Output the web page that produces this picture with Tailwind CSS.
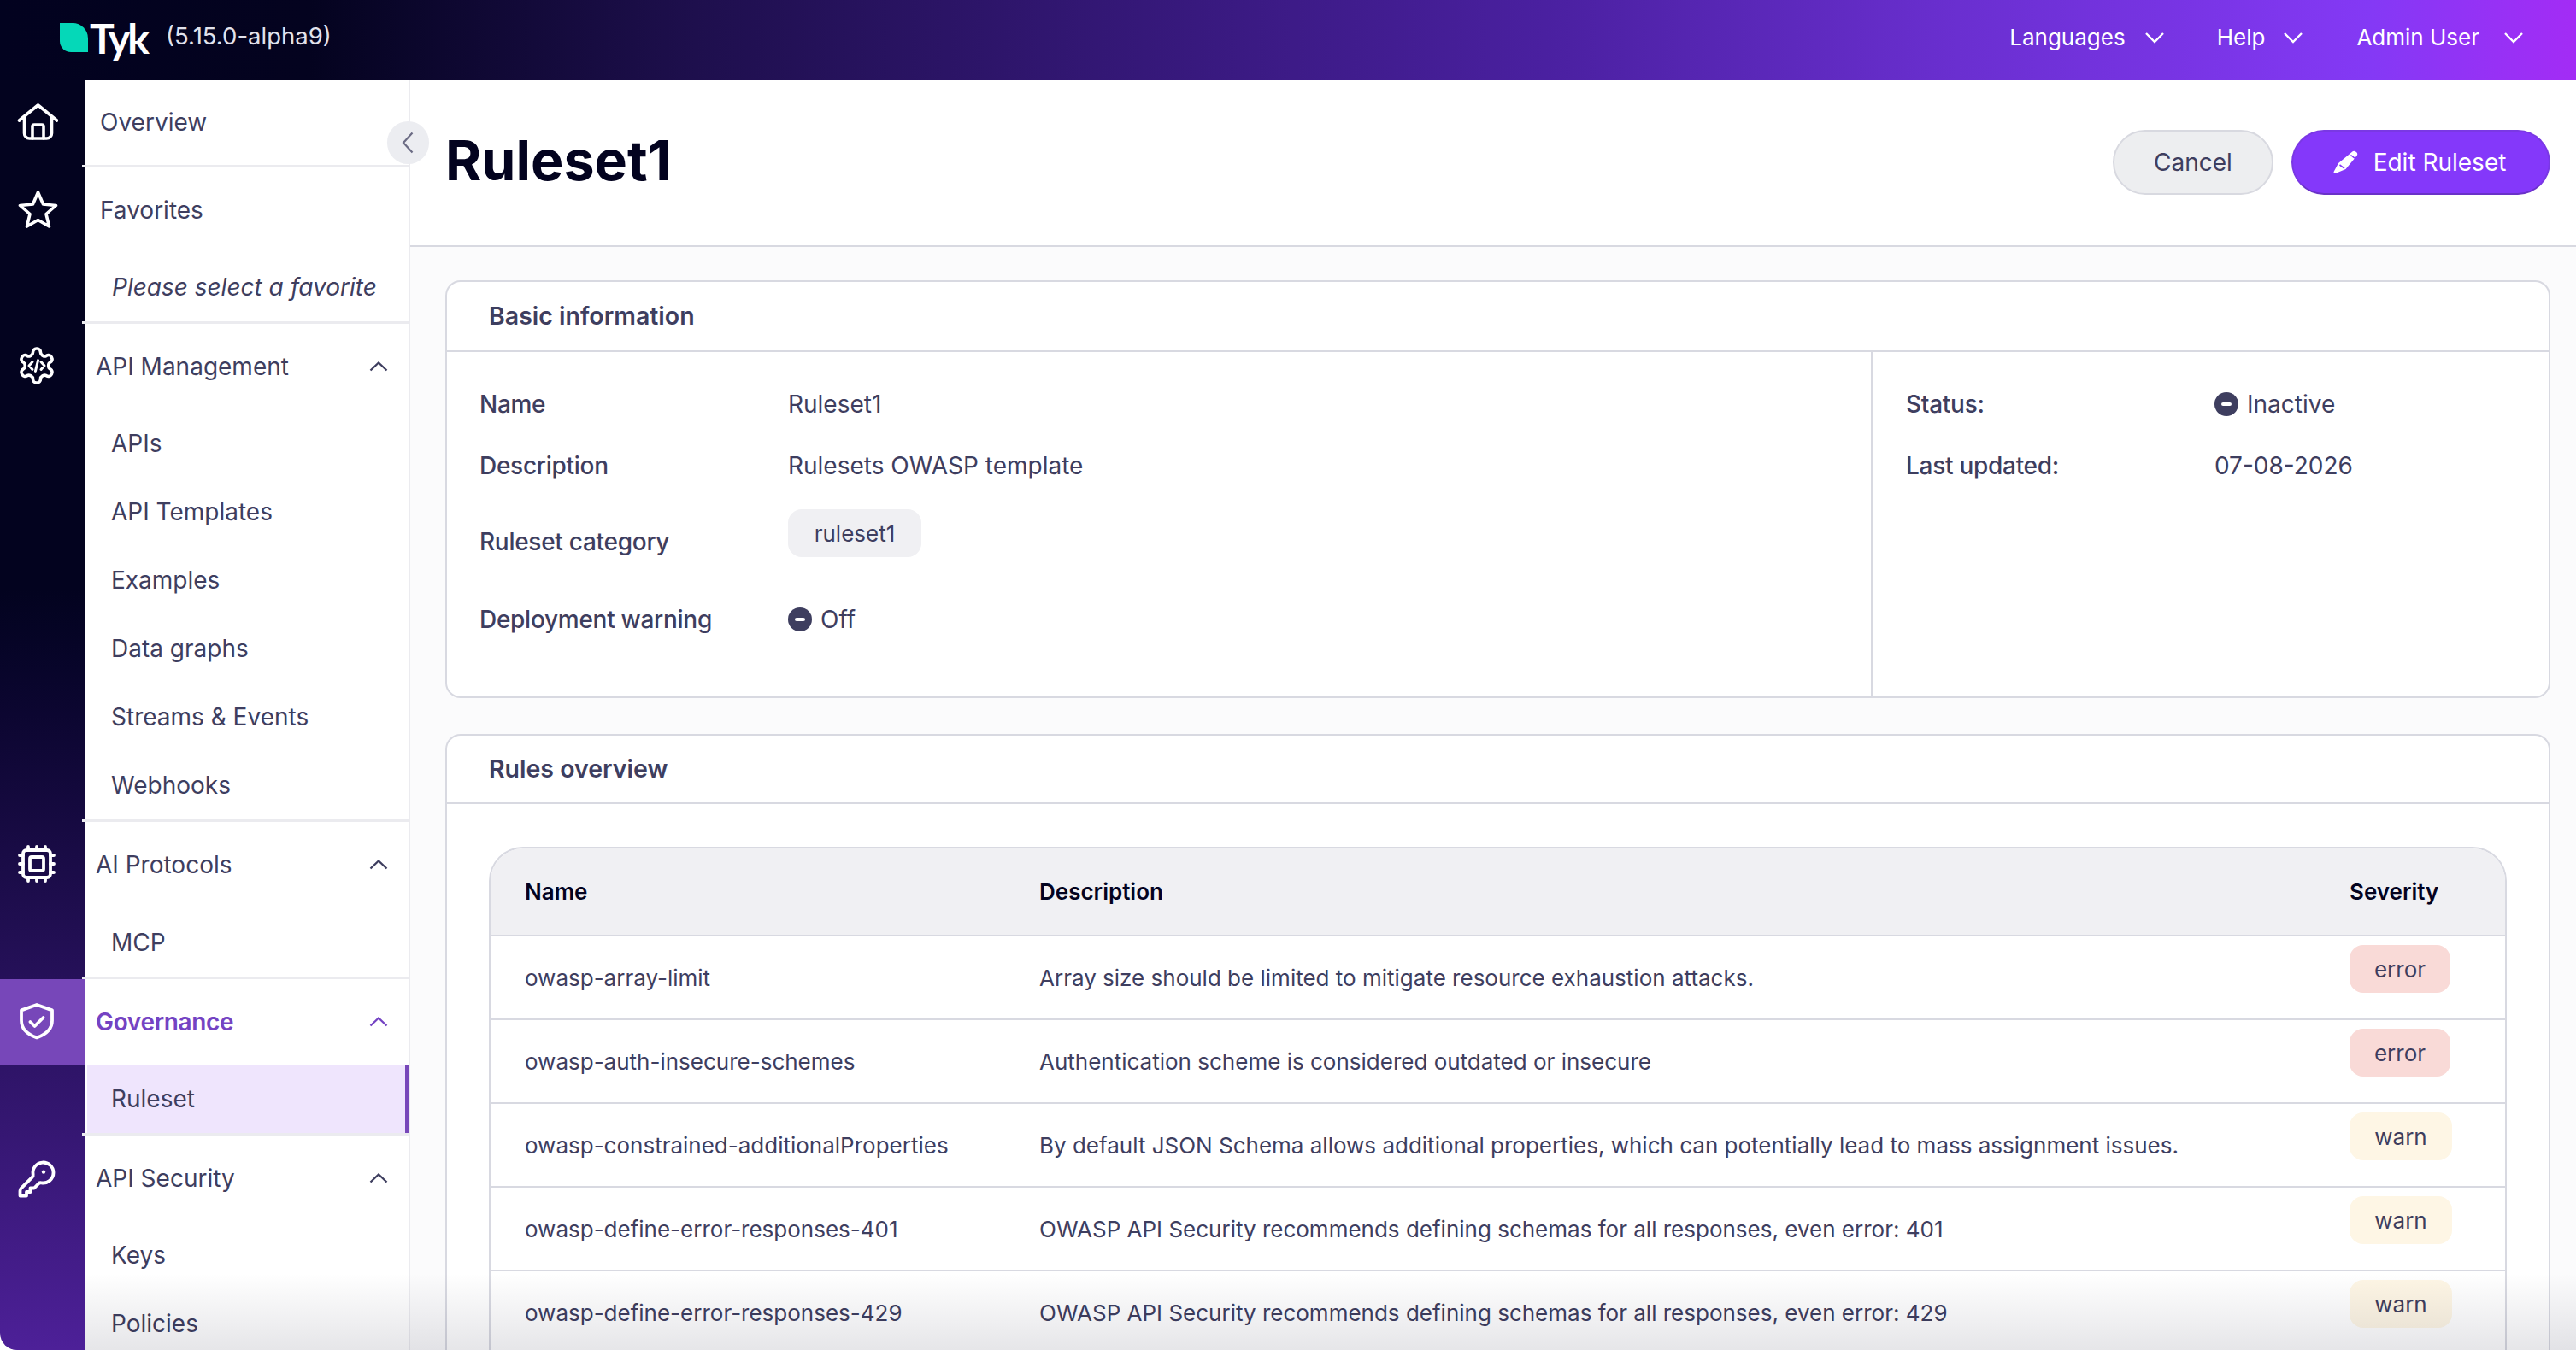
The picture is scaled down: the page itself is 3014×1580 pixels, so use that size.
<!DOCTYPE html>
<html lang="en">
<head>
  <meta charset="UTF-8" />
  <title>Tyk - Ruleset1</title>
  <script src="https://cdn.jsdelivr.net/npm/@tailwindcss/browser@4"></script>
</head>
<body class="font-['Inter',sans-serif] text-[28px] text-[#3e3e5f] bg-white">
<div class="relative w-[3014px] h-[1580px] overflow-hidden flex flex-col">

  <!-- top bar -->
  <header class="h-[94px] shrink-0 flex items-center pr-[61px] text-white bg-[linear-gradient(90deg,#02021f_0%,#04031f_12%,#1e0f4d_27%,#4a20a0_60%,#6a2fd0_76%,#8439f5_92%,#a32cf5_100%)]">
    <div class="ml-[70px] w-[33px] h-[34px] -mt-[6px] bg-[#05d8b8] rounded-tr-[18px] rounded-bl-[13px]"></div>
    <span class="ml-[2px] -mt-[5px] text-[48px] leading-none font-bold tracking-[-0.06em] font-['Lato',sans-serif]">Tyk</span>
    <span class="ml-[22px] -mt-[8px] text-[27.5px] text-[#e2e2ec]">(5.15.0-alpha9)</span>
    <nav class="ml-auto flex items-center text-[26px] -mt-[8px]">
      <span>Languages</span>
      <svg class="ml-[22px] w-[24px] h-[14px] mt-[2px]" viewBox="0 0 24 14" fill="none" stroke="currentColor" stroke-width="2.400"><path d="M2 2l10 10L22 2"/></svg>
      <span class="ml-[61px]">Help</span>
      <svg class="ml-[21px] w-[24px] h-[14px] mt-[2px]" viewBox="0 0 24 14" fill="none" stroke="currentColor" stroke-width="2.400"><path d="M2 2l10 10L22 2"/></svg>
      <span class="ml-[62px]">Admin User</span>
      <svg class="ml-[28px] w-[24px] h-[14px] mt-[2px]" viewBox="0 0 24 14" fill="none" stroke="currentColor" stroke-width="2.400"><path d="M2 2l10 10L22 2"/></svg>
    </nav>
  </header>

  <div class="flex flex-1 min-h-0">
    <!-- icon rail -->
    <aside class="w-[100px] shrink-0 flex flex-col text-white rounded-bl-[20px] bg-linear-to-b from-[#03031f] from-40% to-[#4d2098]">
      <div class="h-[102px] pb-[7px] flex items-center pl-[20px]">
        <svg class="w-[48px] h-[48px]" viewBox="0 0 48 48" fill="none" stroke="currentColor" stroke-width="3.600" stroke-linecap="round" stroke-linejoin="round"><path d="M2.500 23L24.500 5 46.500 23"/><path d="M8.500 19v19a6 6 0 0 0 6 6h20a6 6 0 0 0 6-6V19"/><path d="M18 44V30a2 2 0 0 1 2-2h9a2 2 0 0 1 2 2v14"/></svg>
      </div>
      <div class="h-[184px] pt-[25px] pl-[20px]">
        <svg class="w-[48px] h-[48px]" viewBox="0 0 48 48" fill="none" stroke="currentColor" stroke-width="3.600" stroke-linejoin="round"><path d="M24.500 4l6 14 15 1.500-11.500 10 3.500 14.500-13-7.500L11.500 44l3.500-14.500L3.500 19.500l15-1.500z"/></svg>
      </div>
      <div class="h-[583px] pt-[24px] pl-[19px]">
        <svg class="w-[48px] h-[48px]" viewBox="0 0 24 24" fill="none" stroke="currentColor" stroke-width="1.800" stroke-linecap="round" stroke-linejoin="round"><path d="M12.220 2h-.44a2 2 0 0 0-2 2v.18a2 2 0 0 1-1 1.730l-.43.250a2 2 0 0 1-2 0l-.15-.08a2 2 0 0 0-2.730.730l-.22.380a2 2 0 0 0 .730 2.730l.15.100a2 2 0 0 1 1 1.720v.510a2 2 0 0 1-1 1.740l-.15.090a2 2 0 0 0-.730 2.730l.22.380a2 2 0 0 0 2.730.730l.15-.08a2 2 0 0 1 2 0l.43.250a2 2 0 0 1 1 1.730V20a2 2 0 0 0 2 2h.44a2 2 0 0 0 2-2v-.18a2 2 0 0 1 1-1.730l.43-.25a2 2 0 0 1 2 0l.15.08a2 2 0 0 0 2.730-.73l.22-.39a2 2 0 0 0-.73-2.730l-.15-.08a2 2 0 0 1-1-1.740v-.5a2 2 0 0 1 1-1.740l.15-.09a2 2 0 0 0 .73-2.730l-.22-.38a2 2 0 0 0-2.730-.73l-.15.08a2 2 0 0 1-2 0l-.43-.25a2 2 0 0 1-1-1.730V4a2 2 0 0 0-2-2z"/><path stroke-width="1.500" d="M9.500 9.800L7.500 12l2 2.200M14.500 9.800l2 2.200-2 2.200M12.800 8.800l-1.600 6.400"/></svg>
      </div>
      <div class="h-[183px] pt-[24px] pl-[19px]">
        <svg class="w-[48px] h-[48px]" viewBox="0 0 24 24" fill="none" stroke="currentColor" stroke-width="1.900" stroke-linecap="round" stroke-linejoin="round"><path d="M12 20v2M12 2v2M17 20v2M17 2v2M2 12h2M2 17h2M2 7h2M20 12h2M20 17h2M20 7h2M7 20v2M7 2v2"/><rect x="4" y="4" width="16" height="16" rx="2"/><rect x="8" y="8" width="8" height="8" rx="1"/></svg>
      </div>
      <div class="h-[101px] pb-[3px] flex items-center pl-[19px] bg-[#7747b9]">
        <svg class="w-[48px] h-[48px]" viewBox="0 0 24 24" fill="none" stroke="currentColor" stroke-width="1.900" stroke-linecap="round" stroke-linejoin="round"><path d="M12 2.500l9 3.200v6c0 5-4.200 8.300-9 10-4.800-1.700-9-5-9-10v-6z"/><path d="M8.200 12.500l2.600 2.500 5-5"/></svg>
      </div>
      <div class="h-[83px]"></div>
      <div class="pt-[26px] pl-[19px]">
        <svg class="w-[48px] h-[48px]" viewBox="0 0 24 24" fill="none" stroke="currentColor" stroke-width="1.900"><path stroke-linejoin="round" d="M21.750 8.250a6 6 0 0 1-7.029 5.912c-.563-.097-1.159.026-1.563.43L10.500 17.250H8.250v2.250H6v2.250H2.250v-2.818c0-.597.237-1.170.659-1.591l6.499-6.499c.404-.404.527-1 .43-1.563A6 6 0 1 1 21.750 8.250Z"/><circle cx="16" cy="7.800" r="1.100" fill="currentColor" stroke="none"/></svg>
      </div>
    </aside>

    <!-- section nav -->
    <nav class="relative w-[380px] shrink-0 border-r-2 border-[#ebebef] bg-white">
      <div class="h-[99px] flex items-center pl-[17px] pb-[2px]">Overview</div>
      <div class="h-[3px] -ml-[4px] bg-[#ebebef]"></div>
      <div class="h-[100px] flex items-center pl-[17px]">Favorites</div>
      <div class="h-[80px] flex items-center pl-[31px] italic">Please select a favorite</div>
      <div class="h-[3px] -ml-[4px] bg-[#ebebef]"></div>

      <div class="h-[100px] flex items-center justify-between pl-[12px] pr-[24px] pb-[1px]">
        <span>API Management</span>
        <svg class="w-[22px] h-[12px]" viewBox="0 0 22 12" fill="none" stroke="currentColor" stroke-width="2.300"><path d="M1.500 10.500L11 1.500l9.500 9"/></svg>
      </div>
      <div class="h-[80px] flex items-center pl-[30px]">APIs</div>
      <div class="h-[80px] flex items-center pl-[30px]">API Templates</div>
      <div class="h-[80px] flex items-center pl-[30px]">Examples</div>
      <div class="h-[80px] flex items-center pl-[30px]">Data graphs</div>
      <div class="h-[80px] flex items-center pl-[30px]">Streams &amp; Events</div>
      <div class="h-[80px] flex items-center pl-[30px]">Webhooks</div>
      <div class="h-[3px] -ml-[4px] bg-[#ebebef]"></div>

      <div class="h-[100px] flex items-center justify-between pl-[12px] pr-[24px]">
        <span>AI Protocols</span>
        <svg class="w-[22px] h-[12px]" viewBox="0 0 22 12" fill="none" stroke="currentColor" stroke-width="2.300"><path d="M1.500 10.500L11 1.500l9.500 9"/></svg>
      </div>
      <div class="h-[81px] flex items-center pl-[30px]">MCP</div>
      <div class="h-[3px] -ml-[4px] bg-[#ebebef]"></div>

      <div class="h-[100px] flex items-center justify-between pl-[12px] pr-[24px] text-[#7443c3] font-semibold tracking-[-0.012em]">
        <span>Governance</span>
        <svg class="w-[22px] h-[12px]" viewBox="0 0 22 12" fill="none" stroke="currentColor" stroke-width="2.300"><path d="M1.500 10.500L11 1.500l9.500 9"/></svg>
      </div>
      <div class="h-[80px] ml-[2px] flex items-center pl-[28px] bg-[#efe5fd] border-r-4 border-[#7747b9]">Ruleset</div>
      <div class="h-[3px] -ml-[4px] bg-[#ebebef]"></div>

      <div class="h-[99px] flex items-center justify-between pl-[12px] pr-[24px]">
        <span>API Security</span>
        <svg class="w-[22px] h-[12px]" viewBox="0 0 22 12" fill="none" stroke="currentColor" stroke-width="2.300"><path d="M1.500 10.500L11 1.500l9.500 9"/></svg>
      </div>
      <div class="h-[81px] flex items-center pl-[30px]">Keys</div>
      <div class="h-[80px] flex items-center pl-[30px]">Policies</div>

      <button class="absolute top-[48px] -right-[24px] w-[49px] h-[50px] rounded-full bg-[#ecedf1] flex items-center justify-center text-[#6b6b84]">
        <svg class="w-[14px] h-[26px] -ml-[2px]" viewBox="0 0 14 26" fill="none" stroke="currentColor" stroke-width="2.200"><path d="M12.500 1.500L2 13l10.500 11.500"/></svg>
      </button>
    </nav>

    <!-- main -->
    <main class="flex-1 min-w-0 flex flex-col bg-[#fbfbfc]">
      <div class="h-[195px] shrink-0 bg-white border-b-2 border-[#d8d9e1] flex items-center justify-between pl-[41px] pr-[30px] pb-[4px]">
        <h1 class="text-[64.5px] font-bold text-[#03031f]">Ruleset1</h1>
        <div class="flex items-center gap-[21px] mt-[2px]">
          <button class="w-[188px] h-[76px] rounded-full bg-[#edeef0] border-2 border-[#d8d9e0]">Cancel</button>
          <button class="w-[303px] h-[76px] rounded-full bg-[#8438fa] border-2 border-[#7a38e4] border-b-[#6a32c8] text-white flex items-center justify-center gap-[18px] pr-[4px]">
            <svg class="w-[30px] h-[28px]" viewBox="0 0 30 28" fill="currentColor"><path d="M23 1.800c1.100-1.200 2.700-1.400 3.900-.5l1.300 1c1.200.9 1.400 2.600.5 3.800L15.500 22 3.500 27c-1.300.5-2.300-.6-1.900-1.900L7 15z"/><path d="M21.500 5.500l4.500 3.600M8.500 17l5.500 4.200" stroke="#8438fa" stroke-width="1.600" fill="none"/></svg>
            <span>Edit Ruleset</span>
          </button>
        </div>
      </div>

      <div class="flex-1 min-h-0 pt-[39px] pl-[41px] pr-[30px] flex flex-col gap-[42px]">
        <!-- basic information -->
        <section class="h-[489px] shrink-0 bg-white border-2 border-[#d8d9e1] rounded-[18px] flex flex-col">
          <h2 class="h-[82px] shrink-0 flex items-center pl-[49px] font-semibold text-[28.5px] border-b-2 border-[#d8d9e1]">Basic information</h2>
          <div class="flex flex-1">
            <div class="w-[1668px] border-r-2 border-[#d8d9e1] pl-[38px] pt-[40px] flex flex-col gap-[32px]">
              <div class="grid grid-cols-[361px_1fr] h-[40px] items-center"><span class="font-medium tracking-[-0.01em]">Name</span><span>Ruleset1</span></div>
              <div class="grid grid-cols-[361px_1fr] h-[40px] items-center"><span class="font-medium tracking-[-0.01em]">Description</span><span>Rulesets OWASP template</span></div>
              <div class="grid grid-cols-[361px_1fr] h-[56px]">
                <span class="font-medium tracking-[-0.01em] mt-[17px]">Ruleset category</span>
                <span class="w-[156px] h-[56px] flex items-center justify-center rounded-[16px] bg-[#f0f0f3] text-[26px]">ruleset1</span>
              </div>
              <div class="grid grid-cols-[361px_1fr] h-[40px] items-center mt-[20px]">
                <span class="font-medium tracking-[-0.01em]">Deployment warning</span>
                <span class="flex items-center gap-[10px]">
                  <span class="w-[28px] h-[28px] rounded-full bg-[#3e3e5f] flex items-center justify-center"><span class="w-[12px] h-[4px] rounded-full bg-white"></span></span>Off
                </span>
              </div>
            </div>
            <div class="flex-1 pl-[39px] pt-[40px] flex flex-col gap-[32px]">
              <div class="grid grid-cols-[361px_1fr] h-[40px] items-center">
                <span class="font-medium tracking-[-0.01em]">Status:</span>
                <span class="flex items-center gap-[10px]">
                  <span class="w-[28px] h-[28px] rounded-full bg-[#3e3e5f] flex items-center justify-center"><span class="w-[12px] h-[4px] rounded-full bg-white"></span></span>Inactive
                </span>
              </div>
              <div class="grid grid-cols-[361px_1fr] h-[40px] items-center"><span class="font-medium tracking-[-0.01em]">Last updated:</span><span>07-08-2026</span></div>
            </div>
          </div>
        </section>

        <!-- rules overview -->
        <section class="flex-1 bg-white border-2 border-[#d8d9e1] border-b-0 rounded-t-[18px]">
          <h2 class="h-[80px] flex items-center pl-[49px] font-semibold text-[28.5px] border-b-2 border-[#d8d9e1]">Rules overview</h2>
          <div class="mt-[50px] mx-[49px] border-2 border-b-0 border-[#d8d9e1] rounded-t-[40px] overflow-hidden text-[26px]">
            <table class="w-full table-fixed border-collapse text-left">
              <colgroup><col class="w-[642px]" /><col class="w-[1533px]" /><col /></colgroup>
              <thead class="bg-[#f0f0f3] text-[#03031f]">
                <tr class="h-[102px] border-b-2 border-[#d8d9e1]">
                  <th class="pl-[40px] font-semibold">Name</th>
                  <th class="font-semibold">Description</th>
                  <th class="font-semibold">Severity</th>
                </tr>
              </thead>
              <tbody>
                <tr class="h-[98px] border-b-2 border-[#d8d9e1]">
                  <td class="pl-[40px]">owasp-array-limit</td>
                  <td>Array size should be limited to mitigate resource exhaustion attacks.</td>
                  <td class="align-top pt-[10px]"><span class="inline-flex w-[118px] h-[56px] items-center justify-center rounded-[16px] bg-[#f9dad7]">error</span></td>
                </tr>
                <tr class="h-[98px] border-b-2 border-[#d8d9e1]">
                  <td class="pl-[40px]">owasp-auth-insecure-schemes</td>
                  <td>Authentication scheme is considered outdated or insecure</td>
                  <td class="align-top pt-[10px]"><span class="inline-flex w-[118px] h-[56px] items-center justify-center rounded-[16px] bg-[#f9dad7]">error</span></td>
                </tr>
                <tr class="h-[98px] border-b-2 border-[#d8d9e1]">
                  <td class="pl-[40px]">owasp-constrained-additionalProperties</td>
                  <td>By default JSON Schema allows additional properties, which can potentially lead to mass assignment issues.</td>
                  <td class="align-top pt-[10px]"><span class="inline-flex w-[120px] h-[56px] items-center justify-center rounded-[16px] bg-[#fef6e5]">warn</span></td>
                </tr>
                <tr class="h-[98px] border-b-2 border-[#d8d9e1]">
                  <td class="pl-[40px]">owasp-define-error-responses-401</td>
                  <td>OWASP API Security recommends defining schemas for all responses, even error: 401</td>
                  <td class="align-top pt-[10px]"><span class="inline-flex w-[120px] h-[56px] items-center justify-center rounded-[16px] bg-[#fef6e5]">warn</span></td>
                </tr>
                <tr class="h-[98px]">
                  <td class="pl-[40px]">owasp-define-error-responses-429</td>
                  <td>OWASP API Security recommends defining schemas for all responses, even error: 429</td>
                  <td class="align-top pt-[10px]"><span class="inline-flex w-[120px] h-[56px] items-center justify-center rounded-[16px] bg-[#fef6e5]">warn</span></td>
                </tr>
              </tbody>
            </table>
          </div>
        </section>
      </div>
    </main>
  </div>

  <!-- fade over the bottom edge -->
  <div class="absolute bottom-0 left-[100px] right-0 h-[90px] pointer-events-none bg-linear-to-b from-transparent to-[#03031f]/10"></div>
</div>
</body>
</html>
